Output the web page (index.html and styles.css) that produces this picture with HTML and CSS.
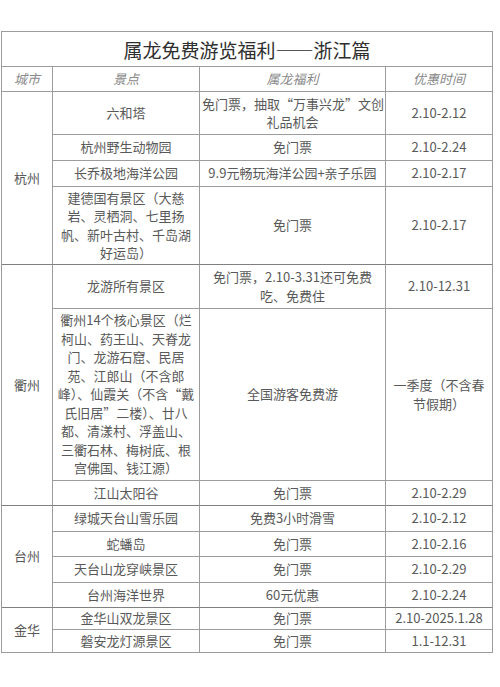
FILE: index.html
```html
<!DOCTYPE html>
<html lang="zh-CN">
<head>
<meta charset="utf-8">
<link rel="stylesheet" href="styles.css">
</head>
<body>
<div class="page">
<table class="sheet">
<colgroup><col class="c1"><col class="c2"><col class="c3"><col class="c4"></colgroup>
<tr class="h35"><td class="title" colspan="4">属龙免费游览福利——浙江篇</td></tr>
<tr class="h25 head"><td>城市</td><td>景点</td><td>属龙福利</td><td>优惠时间</td></tr>
<tr class="h43"><td rowspan="4" class="city grp">杭州</td><td>六和塔</td><td>免门票，抽取“万事兴龙”文创<br>礼品机会</td><td>2.10-2.12</td></tr>
<tr class="h26"><td>杭州野生动物园</td><td>免门票</td><td>2.10-2.24</td></tr>
<tr class="h26"><td>长乔极地海洋公园</td><td>9.9元畅玩海洋公园+亲子乐园</td><td>2.10-2.17</td></tr>
<tr class="h78 grp"><td>建德国有景区（大慈<br>岩、灵栖洞、七里扬<br>帆、新叶古村、千岛湖<br>好运岛）</td><td>免门票</td><td>2.10-2.17</td></tr>
<tr class="h44"><td rowspan="3" class="city grp">衢州</td><td>龙游所有景区</td><td>免门票，2.10-3.31还可免费<br>吃、免费住</td><td>2.10-12.31</td></tr>
<tr class="h172"><td>衢州14个核心景区（烂<br>柯山、药王山、天脊龙<br>门、龙游石窟、民居<br>苑、江郎山（不含郎<br>峰）、仙霞关（不含“戴<br>氏旧居”二楼）、廿八<br>都、清漾村、浮盖山、<br>三衢石林、梅树底、根<br>宫佛国、钱江源）</td><td>全国游客免费游</td><td>一季度（不含春<br>节假期）</td></tr>
<tr class="h25 grp"><td>江山太阳谷</td><td>免门票</td><td>2.10-2.29</td></tr>
<tr class="h26"><td rowspan="4" class="city grp">台州</td><td>绿城天台山雪乐园</td><td>免费3小时滑雪</td><td>2.10-2.12</td></tr>
<tr class="h25"><td>蛇蟠岛</td><td>免门票</td><td>2.10-2.16</td></tr>
<tr class="h26"><td>天台山龙穿峡景区</td><td>免门票</td><td>2.10-2.29</td></tr>
<tr class="h25 grp"><td>台州海洋世界</td><td>60元优惠</td><td>2.10-2.24</td></tr>
<tr class="h22"><td rowspan="2" class="city">金华</td><td>金华山双龙景区</td><td>免门票</td><td>2.10-2025.1.28</td></tr>
<tr class="h23"><td>磐安龙灯源景区</td><td>免门票</td><td>1.1-12.31</td></tr>
</table>
</div>
</body>
</html>
```
FILE: styles.css
```css
html, body {
  margin: 0;
  padding: 0;
  background: #ffffff;
}
.page {
  padding: 31px 0 0 1px;
  font-family: "Noto Sans CJK SC", "Noto Sans", sans-serif;
}
.sheet {
  table-layout: fixed;
  width: 492px;
  border-collapse: separate;
  border-spacing: 0;
  border-top: 1px solid #9c9c9c;
  border-left: 1px solid #9c9c9c;
}
.c1 { width: 51px; }
.c2 { width: 147px; }
.c3 { width: 186px; }
.c4 { width: 107px; }
.sheet td {
  border-right: 1px solid #9c9c9c;
  border-bottom: 1px solid #9c9c9c;
  padding: 0 2px;
  text-align: center;
  vertical-align: middle;
  font-size: 13px;
  line-height: 18.5px;
  color: #595959;
  white-space: nowrap;
  overflow: hidden;
}
.sheet .title {
  font-size: 19px;
  color: #2e2e2e;
  line-height: 24px;
  padding-top: 1px;
}
.head td {
  font-style: italic;
  color: #8a8a8a;
}
.sheet .grp, .grp td {
  border-bottom-color: #808080;
}
.h22 { height: 22px; }
.h23 { height: 23px; }
.h25 { height: 25px; }
.h26 { height: 26px; }
.h35 { height: 35px; }
.h43 { height: 43px; }
.h44 { height: 44px; }
.h78 { height: 78px; }
.h172 { height: 172px; }
```
